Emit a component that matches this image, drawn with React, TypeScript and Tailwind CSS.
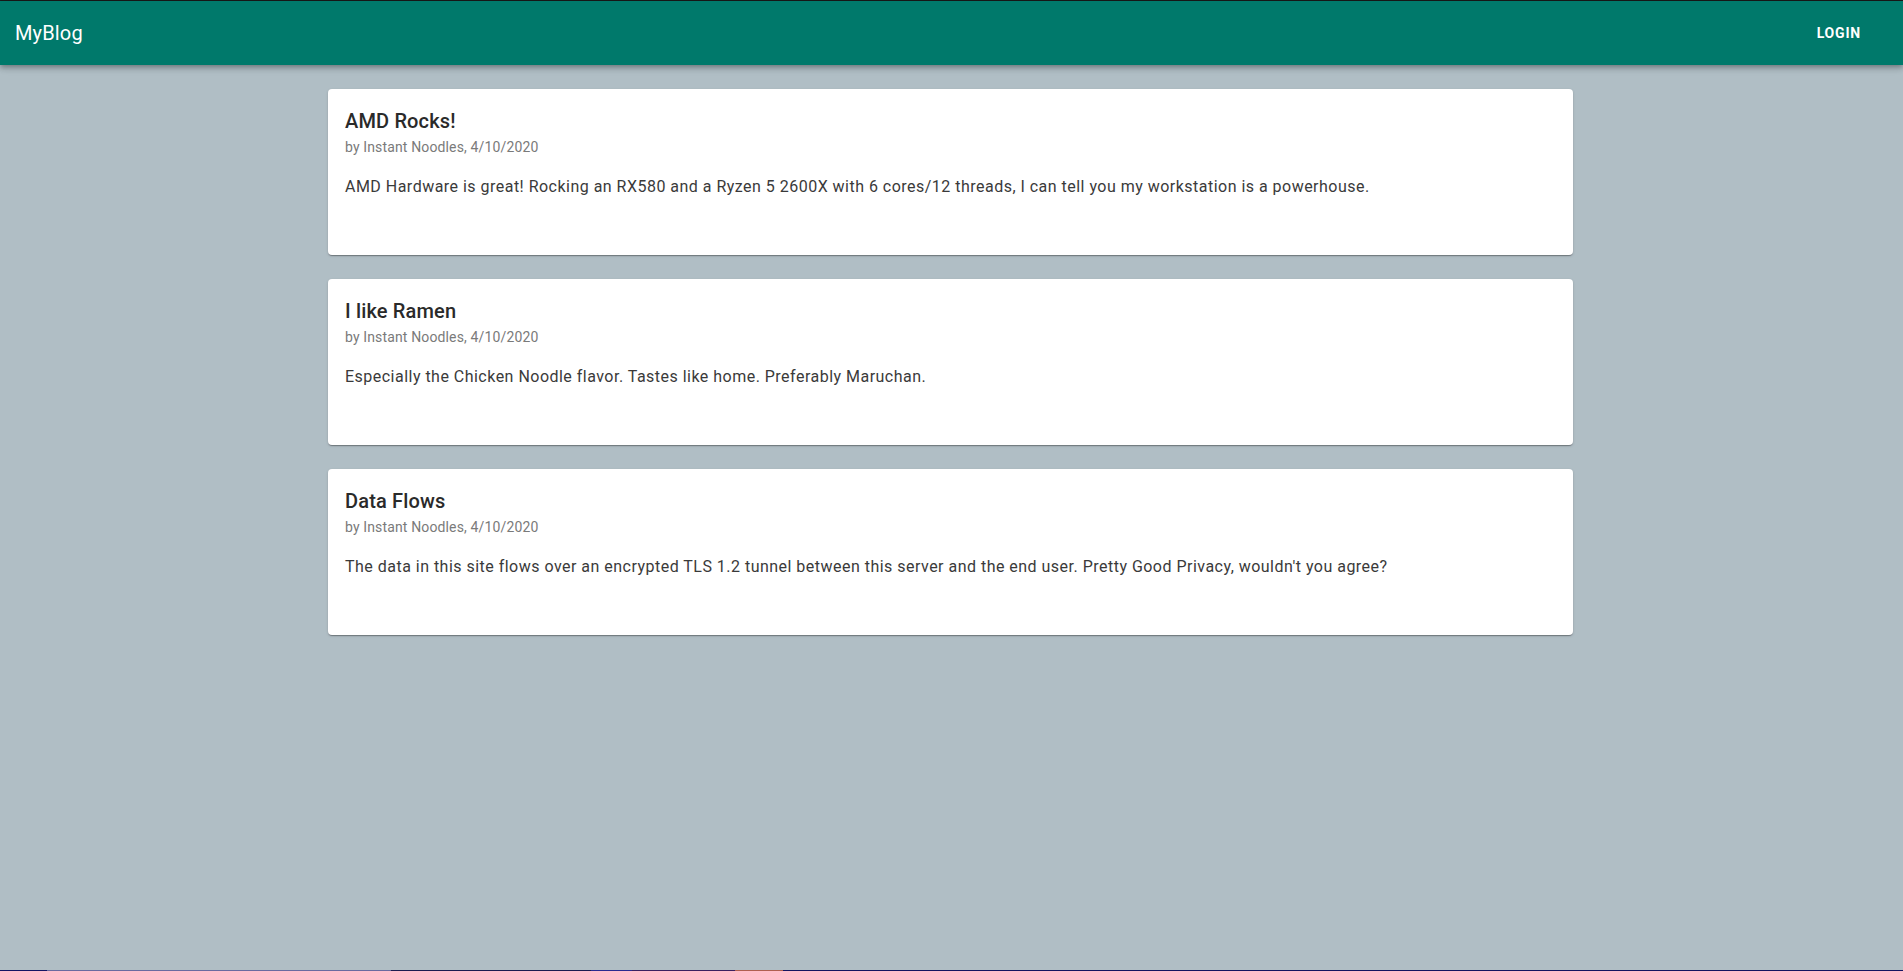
import React from "react";

const posts = [
  {
    title: "AMD Rocks!",
    meta: "by Instant Noodles, 4/10/2020",
    body: "AMD Hardware is great! Rocking an RX580 and a Ryzen 5 2600X with 6 cores/12 threads, I can tell you my workstation is a powerhouse.",
  },
  {
    title: "I like Ramen",
    meta: "by Instant Noodles, 4/10/2020",
    body: "Especially the Chicken Noodle flavor. Tastes like home. Preferably Maruchan.",
  },
  {
    title: "Data Flows",
    meta: "by Instant Noodles, 4/10/2020",
    body: "The data in this site flows over an encrypted TLS 1.2 tunnel between this server and the end user. Pretty Good Privacy, wouldn't you agree?",
  },
];

export default function App() {
  return (
    <div
      className="flex h-[971px] w-full flex-col overflow-hidden bg-[#b0bec5]"
      style={{ fontFamily: "Roboto, 'Liberation Sans', sans-serif" }}
    >
      <div className="h-px w-full shrink-0 bg-[#1a1a1a]" />
      <header className="relative z-10 flex h-16 shrink-0 items-center justify-between bg-[#00796b] pl-[15px] pr-[26px] text-white shadow-[0px_2px_4px_-1px_rgba(0,0,0,0.2),0px_4px_5px_0px_rgba(0,0,0,0.14),0px_1px_10px_0px_rgba(0,0,0,0.12)]">
        <div className="text-[20px] font-normal leading-[1.6] tracking-[0.0075em]">MyBlog</div>
        <button className="rounded px-4 py-[6px] text-[14px] font-bold uppercase leading-[1.75] tracking-[0.8px] text-white">
          Login
        </button>
      </header>
      <main className="flex flex-1 flex-col gap-6 pl-[328px] pt-6">
        {posts.map((p) => (
          <article
            key={p.title}
            className="h-[166px] w-[1245px] rounded bg-white pl-[17px] pr-4 pt-4 shadow-[0px_2px_1px_-1px_rgba(0,0,0,0.2),0px_1px_1px_0px_rgba(0,0,0,0.14),0px_1px_3px_0px_rgba(0,0,0,0.12)]"
          >
            <h2 className="text-[20px] font-medium leading-[1.6] tracking-[0.0075em] text-[#2a2a2a]">
              {p.title}
            </h2>
            <div className="text-[14px] leading-[20px] tracking-[0.01em] text-[#7a7a7a]">{p.meta}</div>
            <p className="mt-[18px] text-[16px] leading-6 tracking-[0.48px] text-[#3a3a3a]">{p.body}</p>
          </article>
        ))}
      </main>
      <div className="flex h-px w-full shrink-0">
        <div className="w-[47px] bg-[#141464]" />
        <div className="w-[344px] bg-[#6a6aa0]" />
        <div className="w-[200px] bg-[#1c1c50]" />
        <div className="w-[41px] bg-[#2a2a90]" />
        <div className="w-[103px] bg-[#3a2060]" />
        <div className="w-[48px] bg-[#b06050]" />
        <div className="flex-1 bg-[#141460]" />
      </div>
    </div>
  );
}
